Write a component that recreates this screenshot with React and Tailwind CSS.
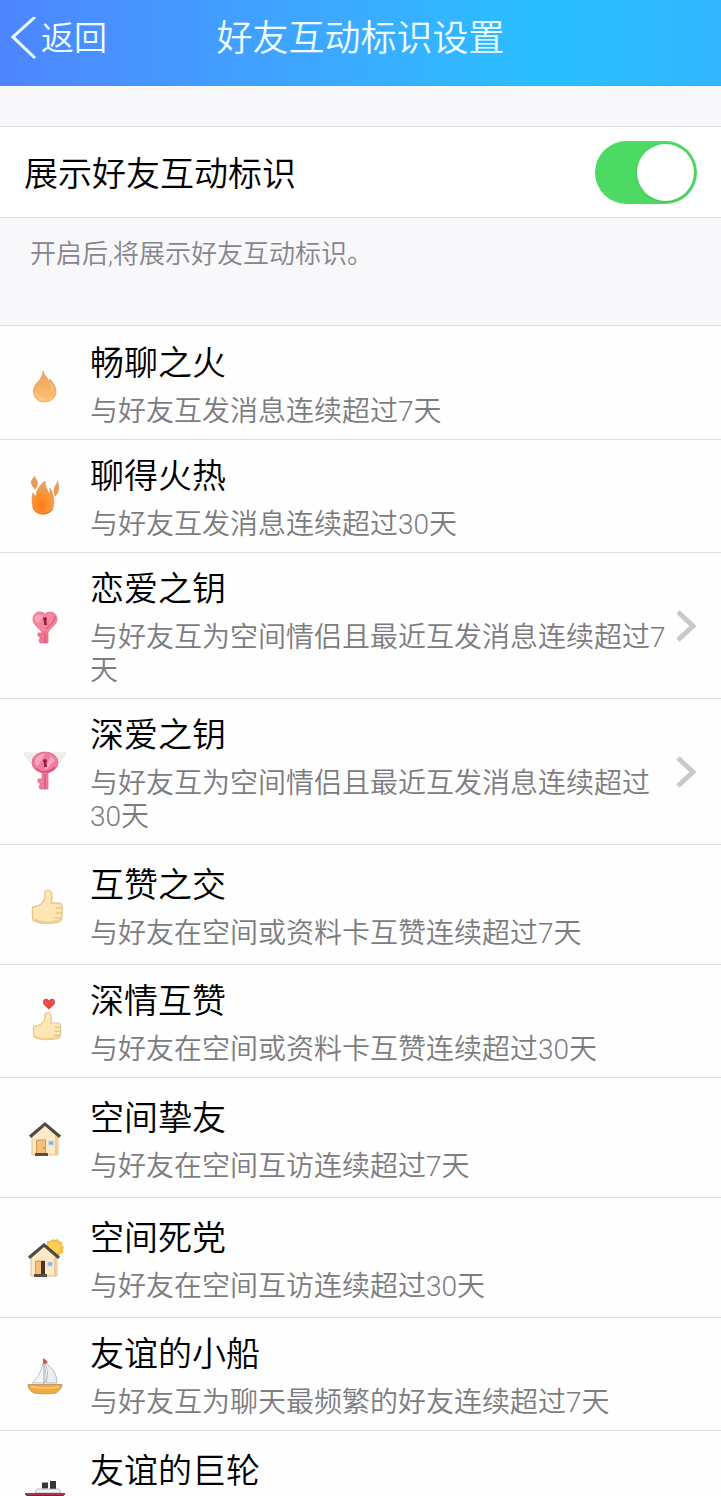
import React from 'react';

function Flame() {
  return (
    <svg viewBox="0 0 48 48" className="size-12" aria-hidden="true">
      <defs>
        <linearGradient id="flame" x1="0" y1="0" x2="0" y2="1">
          <stop offset="0" stopColor="#e9a45f" />
          <stop offset="0.5" stopColor="#f6b062" />
          <stop offset="1" stopColor="#fcc579" />
        </linearGradient>
      </defs>
      <path d="M23 12c1 4 4 6 6 10 1-1 1-1 1-2 3 3 6 8 6 12 0 7-5 11-11.500 11S13.500 39 13.500 32c0-5 3-8 6-11 2-3 3-5 3.500-9z" fill="url(#flame)" stroke="#e3a064" strokeWidth="0.7" />
      <path d="M30 24c2 3 3 5 2 8M16 34c1 4 4 6 9 6" fill="none" stroke="#ffd596" strokeWidth="1" strokeLinecap="round" />
    </svg>
  );
}

function BigFlame() {
  return (
    <svg viewBox="0 0 48 48" className="size-12" aria-hidden="true">
      <defs>
        <linearGradient id="spark" x1="0" y1="0" x2="0" y2="1">
          <stop offset="0" stopColor="#dfa066" />
          <stop offset="1" stopColor="#ee9654" />
        </linearGradient>
        <radialGradient id="bigflame" cx="0.42" cy="0.75" r="0.7">
          <stop offset="0" stopColor="#ff7b1c" />
          <stop offset="0.55" stopColor="#fa9433" />
          <stop offset="1" stopColor="#e6a366" />
        </radialGradient>
      </defs>
      <path d="M15 3c0 4 3 5 3 8 0 3-2 5-3 7-1-3-4-4-4-8 0-3 3-4 4-7z" fill="url(#spark)" />
      <path d="M38 8c0 3 1 5 1 8 0 4-2 6-4 9-1-4-2-6-1-9s3-5 4-8z" fill="url(#spark)" />
      <path d="M25 9c0 5 2 8 4 13 1-2 1-4 1-6 3 5 4 10 4 14 0 8-5 12-11 12-7 0-11-5-11-12 0-4 0-6 1-9 1 1 2 3 3 4 0-7 4-12 9-16z" fill="url(#bigflame)" stroke="#e0924f" strokeWidth="0.6" />
      <path d="M13 36c2 4 6 6 10 6s8-2 10-5" fill="none" stroke="#ef6a18" strokeWidth="1" />
    </svg>
  );
}

function Keyhole({ y }) {
  return (
    <g fill="#98203f">
      <circle cx="25" cy={y} r="2" />
      <path d={`M24 ${y}h2l1 6h-3z`} />
    </g>
  );
}

function HeartKey() {
  return (
    <svg viewBox="0 0 48 48" className="size-12" aria-hidden="true">
      <path d="M22 28h6v13h-8l-1-3 1-1v-2l-2-1v-3h4z" fill="#ee7893" stroke="#dc6380" strokeWidth="0.7" />
      <path d="M25 12c4-4 12-2 12 5 0 5-5 8-9 13h-6C19 26 13 23 13 17c0-7 8-9 12-5z" fill="#f5869f" stroke="#e36c88" strokeWidth="0.8" />
      <path d="M15 15c2-3 6-3 8 0l-5 6c-2-2-4-3-3-6z" fill="#fba9ba" />
      <path d="M35 14c1 5-4 8-9 13M25 32v8" fill="none" stroke="#d95676" strokeWidth="1.2" />
      <Keyhole y={17} />
    </svg>
  );
}

function WingedKey() {
  return (
    <svg viewBox="0 0 48 48" className="size-12" aria-hidden="true">
      <path d="M4 5h14l-4 11c-4-1-5-3-5-5-3-1-4-3-5-6zM46 5H32l4 11c4-1 5-3 5-5 3-1 4-3 5-6z" fill="#f6f1f2" stroke="#e6dfe1" strokeWidth="0.8" />
      <path d="M7 8h8M10 11h4M43 8h-8M40 11h-4" stroke="#e0d9db" strokeWidth="0.8" />
      <path d="M22 24h6v17h-8l-1-3 1-1v-2l-2-1v-3h4z" fill="#ef7d9f" stroke="#dc6388" strokeWidth="0.7" />
      <ellipse cx="25" cy="14.500" rx="13" ry="10.500" fill="#f07c9e" stroke="#dc6389" strokeWidth="0.8" />
      <path d="M15 14c0-5 5-8 10-8l-7 12c-2-1-3-2-3-4zM31 8l4 4-8 9-3 1z" fill="#f9a8bf" />
      <path d="M16 20c4 5 14 5 19-1M25 26v14" fill="none" stroke="#d54c77" strokeWidth="1.2" />
      <Keyhole y={13} />
    </svg>
  );
}

function ThumbShape() {
  return (
    <>
      <path d="M12.500 27c0-1 1-1.500 2-1.500 5 0 9-4 10-8 1-2 0-5 .5-6.500 1-2.500 5-2.500 6 0 1.500 3 1 7 0 11h7c3 0 4 1 4 4v9c0 4-2 6.500-6 6.500-6 1-13 1-17 0-2-1-5-1-6-2.500-.8-1-.5-9-.5-12z" fill="#fee7b4" stroke="#e2c894" strokeWidth="1.400" strokeLinejoin="round" />
      <path d="M36 27h6M36 32h6M35 37h6" stroke="#dfb878" strokeWidth="1.200" strokeLinecap="round" />
      <path d="M14 38.500c3 0 4 2 7 2 5 .5 11 .5 15-.5 3-.5 4-2 4-4" fill="none" stroke="#f5cd83" strokeWidth="1.400" />
    </>
  );
}

function Thumb() {
  return (
    <svg viewBox="0 0 48 48" className="size-12" aria-hidden="true">
      <ThumbShape />
    </svg>
  );
}

function HeartThumb() {
  return (
    <svg viewBox="0 0 48 48" className="size-12" aria-hidden="true">
      <path d="M29 3.500c2-3 6-2 6 1.500 0 3-3 4.500-6 7.500-3-3-6-4.500-6-7.500 0-3.500 4-4.500 6-1.500z" fill="#e5483f" />
      <path d="M25 4.500l3 2.500M31 5l2 0" fill="none" stroke="#f07a6c" strokeWidth="1" />
      <g transform="translate(2 8) scale(0.92 0.82)">
        <ThumbShape />
      </g>
    </svg>
  );
}

function HouseShape({ open }) {
  return (
    <>
      <path d="M25 11L12 23v18h26V23z" fill="#fbe9c8" stroke="#e3bd88" strokeWidth="1" />
      <path d="M36 22v19" stroke="#f0c98d" strokeWidth="2" />
      <path d="M16.500 26h9v14h-9z" fill="#f7be76" stroke="#d39b58" strokeWidth="1" />
      {open ? <path d="M22 26h4v15h-4z" fill="#43342c" /> : <circle cx="24" cy="34" r="0.8" fill="#9b672f" />}
      <path d="M28.500 27h5v4h-5z" fill="#82b4df" stroke="#c9dcee" strokeWidth="1" />
      <path d="M15 39h13v3H15z" fill="#5c4d45" />
      <path d="M9 21.500L25 8l16 13.500-2 2.500-14-12-14 12z" fill="#514844" />
    </>
  );
}

function House() {
  return (
    <svg viewBox="0 0 48 48" className="size-12" aria-hidden="true">
      <HouseShape />
    </svg>
  );
}

function SunHouse() {
  return (
    <svg viewBox="0 0 48 48" className="size-12" aria-hidden="true">
      <path d="M33 5l2 1 3-1 1 2 3 1 0 3 2 2-1 3 0 3-3 1-2 3-3-1-3 1-2-3-4-1 1-3-2-3 2-2 0-4 3 0z" fill="#f8bd42" />
      <circle cx="34" cy="14" r="6.500" fill="#ffce57" />
      <g transform="translate(-1 1)">
        <HouseShape open />
      </g>
    </svg>
  );
}

function Sailboat() {
  return (
    <svg viewBox="0 0 48 48" className="size-12" aria-hidden="true">
      <path d="M23 13c-2 9-5 15-11 20h13c2-6 1-13-2-20z" fill="#f1f5f8" stroke="#b4bec6" strokeWidth="0.9" />
      <path d="M25 13c7 4 12 11 12 20H26c2-7 2-13-1-20z" fill="#e9eff4" stroke="#aab5be" strokeWidth="0.9" />
      <path d="M24 10v24" stroke="#b9a392" strokeWidth="1" />
      <path d="M23 8l3 2 2 3-5 1z" fill="#c85a4f" />
      <path d="M8 34.500h34c0 4-4 7-6 8.500-6 1-16 1-22 0-3-1.500-6-4.500-6-8.500z" fill="#efac45" stroke="#b98b52" strokeWidth="0.8" />
      <path d="M11 37c7 1 21 1 28 0" fill="none" stroke="#ffcb6c" strokeWidth="1.500" />
    </svg>
  );
}

function Steamship() {
  return (
    <svg viewBox="0 0 48 48" className="size-12" aria-hidden="true">
      <path d="M22 15.500h6v6h-6zM30 14h6v8h-6z" fill="#35343a" />
      <path d="M17 22h22l2 4H15z" fill="#f3f2f4" stroke="#a9a7ad" strokeWidth="0.8" />
      <path d="M5 26h40v2H5z" fill="#b32f48" />
      <path d="M6 28h38l-4 11H11z" fill="#4b3c46" />
    </svg>
  );
}

const badges = [
  { title: '畅聊之火', desc: '与好友互发消息连续超过7天', Icon: Flame },
  { title: '聊得火热', desc: '与好友互发消息连续超过30天', Icon: BigFlame },
  { title: '恋爱之钥', desc: '与好友互为空间情侣且最近互发消息连续超过7天', Icon: HeartKey, link: true },
  { title: '深爱之钥', desc: '与好友互为空间情侣且最近互发消息连续超过30天', Icon: WingedKey, link: true },
  { title: '互赞之交', desc: '与好友在空间或资料卡互赞连续超过7天', Icon: Thumb, roomy: true },
  { title: '深情互赞', desc: '与好友在空间或资料卡互赞连续超过30天', Icon: HeartThumb },
  { title: '空间挚友', desc: '与好友在空间互访连续超过7天', Icon: House, roomy: true },
  { title: '空间死党', desc: '与好友在空间互访连续超过30天', Icon: SunHouse, roomy: true },
  { title: '友谊的小船', desc: '与好友互为聊天最频繁的好友连续超过7天', Icon: Sailboat },
  { title: '友谊的巨轮', Icon: Steamship, roomy: true },
];

function BadgeRow({ title, desc, Icon, link, roomy }) {
  const Row = link ? 'a' : 'div';
  return (
    <li className="border-b border-[#dedee0]">
      <Row
        href={link ? '#' : undefined}
        className={`flex items-center pl-5 pr-6 ${roomy ? 'min-h-[119px]' : 'min-h-28'}`}
      >
        <span className="w-[70px] shrink-0">
          <Icon />
        </span>
        <div className={`min-w-0 flex-1 self-stretch ${roomy ? 'pt-5 pb-[14px]' : 'pt-4 pb-[11px]'}`}>
          <h2 className="text-[34px] leading-10 text-black">{title}</h2>
          {desc && <p className="mt-3 text-[28px] leading-[33px] text-[#7c7c80]">{desc}</p>}
        </div>
        {link && (
          <svg viewBox="0 0 24 36" className="h-9 w-6 shrink-0" aria-hidden="true">
            <path d="M5 4l15 14L5 32" fill="none" stroke="#c9c9cc" strokeWidth="5" />
          </svg>
        )}
      </Row>
    </li>
  );
}

export default function App() {
  return (
    <div className="flex h-screen flex-col bg-[#f8f8fb] font-['Roboto','Noto_Sans_CJK_SC',sans-serif] font-[350]">
      <header className="grid h-[86px] shrink-0 grid-cols-[1fr_auto_1fr] items-center bg-linear-to-r from-[#4d85ff] via-[#28bfff] via-75% to-[#32b6ff] pb-2 text-[#f0ffff]">
        <button type="button" className="flex items-center gap-1 justify-self-start pl-[11px] text-[33px] leading-10">
          <svg viewBox="0 0 26 44" className="h-11 w-[26px]" aria-hidden="true">
            <path d="M24 0L2 20l22 21" fill="none" stroke="currentColor" strokeWidth="3" />
          </svg>
          返回
        </button>
        <h1 className="text-[36px] leading-10">好友互动标识设置</h1>
      </header>

      <main className="min-h-0 flex-1 overflow-y-auto pt-10 [scrollbar-width:none]">
        <label className="flex h-[92px] items-center justify-between border-y border-[#dcdce2] bg-white pl-6 pr-6 text-[34px] text-black">
          <span className="pt-1">展示好友互动标识</span>
          <input
            type="checkbox"
            role="switch"
            defaultChecked
            className="flex h-[63px] w-[102px] appearance-none items-center rounded-full bg-[#d8d8dc] p-[3px] before:size-[57px] before:rounded-full before:bg-white before:shadow checked:justify-end checked:bg-[#4cd964]"
          />
        </label>
        <p className="h-[107px] px-[30px] pt-4 text-[26px] leading-10 text-[#85858a]">开启后,将展示好友互动标识。</p>
        <ul className="border-t border-[#dedee0] bg-[#fefefe] [&>li:first-child]:pt-px">
          {badges.map((badge) => (
            <BadgeRow key={badge.title} {...badge} />
          ))}
        </ul>
      </main>
    </div>
  );
}
